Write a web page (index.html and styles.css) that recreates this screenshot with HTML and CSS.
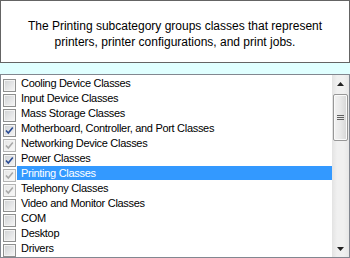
FILE: index.html
```html
<!DOCTYPE html>
<html lang="en">
<head>
    <meta charset="UTF-8">
    <title>WMI Class Categories</title>
    <link rel="stylesheet" href="styles.css">
</head>
<body>
    <div class="description">
        <p>The Printing subcategory groups classes that represent<br>printers, printer configurations, and print jobs.</p>
    </div>
    <div class="listbox">
        <div class="items">
            <div class="item"><span class="box"></span><span class="label">Cooling Device Classes</span></div>
            <div class="item"><span class="box"></span><span class="label">Input Device Classes</span></div>
            <div class="item"><span class="box"></span><span class="label">Mass Storage Classes</span></div>
            <div class="item"><span class="box checked"><svg viewBox="0 0 11 11"><path d="M2 5.5 L4.3 8 L8.8 2.5"/></svg></span><span class="label">Motherboard, Controller, and Port Classes</span></div>
            <div class="item"><span class="box grayed"><svg viewBox="0 0 11 11"><path d="M2 5.5 L4.3 8 L8.8 2.5"/></svg></span><span class="label">Networking Device Classes</span></div>
            <div class="item"><span class="box checked"><svg viewBox="0 0 11 11"><path d="M2 5.5 L4.3 8 L8.8 2.5"/></svg></span><span class="label">Power Classes</span></div>
            <div class="item selected"><span class="box grayed"><svg viewBox="0 0 11 11"><path d="M2 5.5 L4.3 8 L8.8 2.5"/></svg></span><span class="label">Printing Classes</span></div>
            <div class="item"><span class="box grayed"><svg viewBox="0 0 11 11"><path d="M2 5.5 L4.3 8 L8.8 2.5"/></svg></span><span class="label">Telephony Classes</span></div>
            <div class="item"><span class="box"></span><span class="label">Video and Monitor Classes</span></div>
            <div class="item"><span class="box"></span><span class="label">COM</span></div>
            <div class="item"><span class="box"></span><span class="label">Desktop</span></div>
            <div class="item"><span class="box"></span><span class="label">Drivers</span></div>
        </div>
        <div class="scrollbar">
            <div class="arrow"><svg width="7" height="4" viewBox="0 0 7 4"><path d="M3.5 0 L7 4 L0 4 Z"/></svg></div>
            <div class="thumb"><span class="grip"></span></div>
            <div class="track"></div>
            <div class="arrow"><svg width="7" height="4" viewBox="0 0 7 4"><path d="M0 0 L7 0 L3.5 4 Z"/></svg></div>
        </div>
    </div>
</body>
</html>
```

FILE: styles.css
```css
body {
    margin: 0;
    width: 350px;
    height: 258px;
    background-color: #e0ffff;
    font-family: "Liberation Sans", Arial, sans-serif;
    overflow: hidden;
}
.description {
    box-sizing: border-box;
    height: 63px;
    border: 1px solid #646464;
    background-color: white;
    display: flex;
    align-items: center;
    justify-content: center;
    padding-top: 4px;
}
.description p {
    margin: 0;
    font-size: 12px;
    line-height: 16px;
    text-align: center;
    color: #000;
}
.listbox {
    box-sizing: border-box;
    margin-top: 11px;
    height: 184px;
    border: 1px solid #828790;
    background-color: white;
    display: flex;
}
.items {
    flex: 1;
    overflow: hidden;
    padding-top: 1px;
}
.item {
    display: flex;
    align-items: flex-start;
    height: 15px;
    font-size: 11px;
    letter-spacing: -0.3px;
    color: #000;
}
.box {
    box-sizing: border-box;
    flex: none;
    width: 13px;
    height: 13px;
    margin: 3px 1px 0 2px;
    border: 1px solid #8e8f8f;
    box-shadow: inset 0 0 0 1px #f4f4f4;
    background: linear-gradient(135deg, #cfd1d4, #f6f6f6);
    display: flex;
}
.box svg {
    width: 11px;
    height: 11px;
}
.box path {
    fill: none;
    stroke: #2a4b94;
    stroke-width: 1.6;
}
.box.grayed {
    border-color: #b4b4b4;
    background: linear-gradient(135deg, #e6e6e6, #f8f8f8);
}
.box.grayed path {
    stroke: #a8a8a8;
}
.label {
    flex: 1;
    height: 14px;
    line-height: 14px;
    padding-left: 4px;
    white-space: nowrap;
}
.selected .label {
    background-color: #3399ff;
    color: white;
}
.scrollbar {
    flex: none;
    width: 17px;
    display: flex;
    flex-direction: column;
    background: linear-gradient(to right, #e3e3e3, #f0f0f0 30%, #f0f0f0 70%, #e6e6e6);
}
.arrow {
    height: 17px;
    display: flex;
    align-items: center;
    justify-content: center;
}
.arrow path {
    fill: #202020;
}
.thumb {
    box-sizing: border-box;
    height: 47px;
    margin: 2px 1px 0;
    border: 1px solid #979797;
    border-radius: 2px;
    background: linear-gradient(to right, #f2f2f2, #e8e8e8 50%, #d6d6d6);
    box-shadow: inset 0 0 0 1px #fafafa;
    display: flex;
    align-items: center;
    justify-content: center;
}
.grip {
    width: 7px;
    height: 5px;
    background: repeating-linear-gradient(to bottom, #606060 0, #606060 1px, transparent 1px, transparent 2px);
}
.track {
    flex: 1;
}
```
